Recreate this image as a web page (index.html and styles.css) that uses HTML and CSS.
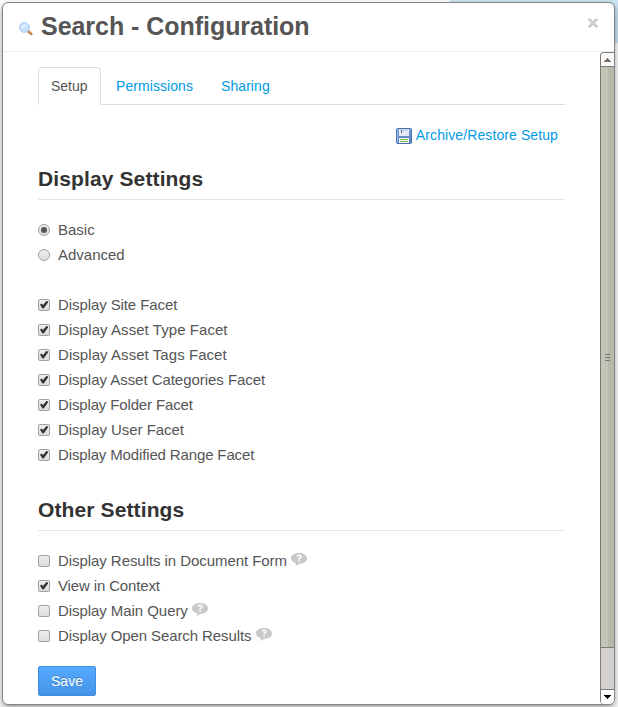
FILE: index.html
```html
<!DOCTYPE html>
<html lang="en">
<head>
<meta charset="utf-8">
<title>Search - Configuration</title>
<link rel="stylesheet" href="styles.css">
</head>
<body>
<svg class="defs" width="0" height="0">
  <symbol id="help" viewBox="0 0 16 14">
    <path d="M8 0C3.500 0 0 2.200 0 5.200c0 2.400 1.900 4.200 5 5L4.600 13 8.500 10.700c4.500 0 7.500-2.300 7.500-5.500S12.500 0 8 0z" fill="#c9c9c9"/>
    <path d="M6 3.500c.3-1.500 4-1.700 4 .2 0 1.300-2 1.200-2 2.800" fill="none" stroke="#fff" stroke-width="1.500"/>
    <rect x="7.200" y="7.300" width="1.600" height="1.500" fill="#fff"/>
  </symbol>
</svg>
<div class="dialog">
  <header class="header">
    <svg class="search-icon" width="14" height="14" viewBox="0 0 14 14">
      <path d="M9 9l3.200 2.800" stroke="#a8683a" stroke-width="2.600" stroke-linecap="round"/>
      <path d="M9.800 9.200l2.600 2.300" stroke="#efb26a" stroke-width="1.100" stroke-linecap="round"/>
      <circle cx="5.500" cy="5.500" r="4.900" fill="#c5e1fb" stroke="#a8c8ec"/>
      <path d="M2.300 5a3.500 3 0 0 1 6.200-1C6.500 4 4.200 5 3.200 7z" fill="#e4f2ff"/>
    </svg>
    <h1 class="title">Search - Configuration</h1>
    <button class="close" aria-label="Close"><svg width="12" height="12" viewBox="0 0 12 12"><path d="M1.700 1.700l8.600 8.600M10.300 1.700l-8.600 8.600" stroke="#ccc" stroke-width="2.700"/></svg></button>
  </header>
  <div class="body">
    <main class="content">
      <nav class="tabs">
        <a class="tab active">Setup</a><a class="tab wide">Permissions</a><a class="tab wide">Sharing</a>
      </nav>
      <div class="archive">
        <svg width="16" height="16" viewBox="0 0 16 16">
          <defs><linearGradient id="disk" x2="0" y2="1"><stop offset="0" stop-color="#7ba4dd"/><stop offset="1" stop-color="#4f7ac0"/></linearGradient></defs>
          <rect x=".5" y=".5" width="15" height="15" rx="1" fill="url(#disk)" stroke="#4c70b0"/>
          <path d="M1.500 1.500v13" stroke="#9dbcea"/>
          <rect x="3" y="1" width="10" height="7" fill="#e3eaf5"/>
          <rect x="4" y="1" width="8" height="2" fill="#cdd8ea"/>
          <rect x="5" y="2" width="1" height="3" fill="#4b6593"/>
          <rect x="3" y="10" width="10" height="5" fill="#f1f7ea"/>
          <path d="M4 11.500h8M4 13.500h8" stroke="#7fbf55"/>
        </svg>
        <a>Archive/Restore Setup</a>
      </div>
      <h2 class="legend">Display Settings</h2>
      <div class="group">
        <label class="row"><i class="radio on"></i>Basic</label>
        <label class="row"><i class="radio"></i>Advanced</label>
      </div>
      <div class="group facets">
        <label class="row tight"><i class="check on"></i>Display Site Facet</label>
        <label class="row loose"><i class="check on"></i>Display Asset Type Facet</label>
        <label class="row loose"><i class="check on"></i>Display Asset Tags Facet</label>
        <label class="row snug"><i class="check on"></i>Display Asset Categories Facet</label>
        <label class="row tighter"><i class="check on"></i>Display Folder Facet</label>
        <label class="row snug"><i class="check on"></i>Display User Facet</label>
        <label class="row tighter"><i class="check on"></i>Display Modified Range Facet</label>
      </div>
      <h2 class="legend other">Other Settings</h2>
      <div class="group">
        <label class="row medium"><i class="check"></i>Display Results in Document Form<svg class="help"><use href="#help"/></svg></label>
        <label class="row tighter"><i class="check on"></i>View in Context</label>
        <label class="row medium"><i class="check"></i>Display Main Query<svg class="help"><use href="#help"/></svg></label>
        <label class="row tight"><i class="check"></i>Display Open Search Results<svg class="help"><use href="#help"/></svg></label>
      </div>
      <button class="save">Save</button>
    </main>
    <div class="scrollbar">
      <div class="arrow up"><svg width="7" height="4" viewBox="0 0 7 4" shape-rendering="crispEdges"><path d="M3 0h1v1h1v1h1v1h1v1H0V3h1V2h1V1h1z" fill="#6e6c6a"/></svg></div>
      <div class="thumb"><span class="grip"></span></div>
      <div class="track"></div>
      <div class="arrow down"><svg width="7" height="4" viewBox="0 0 7 4" shape-rendering="crispEdges"><path d="M0 0h7v1H6v1H5v1H4v1H3V3H2V2H1V1H0z" fill="#000"/></svg></div>
    </div>
  </div>
</div>
</body>
</html>
```
FILE: styles.css
```css
* { box-sizing: border-box; }
body {
  margin: 0;
  padding: 2px 3px 2px 2px;
  height: 707px;
  overflow: hidden;
  background: linear-gradient(#cfe6f6, #cfe6f6) 450px 0 / 168px 43px no-repeat #fff;
  font-family: "Liberation Sans", Arial, sans-serif;
  font-size: 15px;
  color: #555;
}
.defs { position: absolute; }
.dialog {
  height: 703px;
  border: 1px solid #808589;
  border-radius: 6px;
  background: #fff;
  box-shadow: 0 3px 7px rgba(0, 0, 0, .4);
  overflow: hidden;
  display: flex;
  flex-direction: column;
}
.header {
  height: 49px;
  flex: none;
  border-bottom: 1px solid #eee;
  display: flex;
  align-items: flex-start;
  padding-left: 16px;
}
.search-icon { margin-top: 19px; }
.title { margin: 8px 0 0 8px; font-size: 25px; line-height: 30px; letter-spacing: -.04px; }
.close {
  margin: 14px 15px 0 auto;
  padding: 0;
  border: 0;
  background: none;
  line-height: 0;
}
.body { flex: 1; min-height: 0; display: flex; }
.content { flex: 1; padding: 15px 35px 0; }
.tabs {
  display: flex;
  height: 38px;
  border-bottom: 1px solid #ddd;
  font-size: 14px;
  line-height: 18px;
}
.tab {
  height: 38px;
  margin-right: 2px;
  padding: 9px 12px 0;
  border: 1px solid transparent;
  color: #009ae5;
}
.tab.wide { letter-spacing: .07px; }
.tab.active {
  width: 63px;
  border-color: #ddd #ddd #fff;
  border-radius: 4px 4px 0 0;
  color: #555;
}
.archive {
  display: flex;
  justify-content: flex-end;
  gap: 4px;
  margin-top: 23px;
  padding-right: 7px;
  height: 16px;
  font-size: 14px;
  line-height: 15px;
  letter-spacing: .1px;
  color: #009ae5;
}
.legend {
  margin: 15px 0 17px;
  height: 41px;
  border-bottom: 1px solid #e5e5e5;
  font-size: 21px;
  line-height: 40px;
  letter-spacing: .12px;
  color: #333;
}
.row { display: flex; align-items: center; height: 25px; }
.tighter { letter-spacing: -.14px; }
.tight { letter-spacing: -.09px; }
.medium { letter-spacing: -.06px; }
.snug { letter-spacing: -.04px; }
.loose { letter-spacing: .06px; }
.facets { margin-top: 25px; }
.legend.other { margin-top: 23px; }
.radio, .check {
  position: relative;
  width: 12px;
  height: 12px;
  margin-right: 8px;
  border: 1px solid #a2a2a2;
  background: linear-gradient(#eee, #dcdcdc);
}
.radio { border-radius: 50%; }
.check { border-radius: 2px; }
.radio.on::after {
  content: "";
  position: absolute;
  inset: 2px;
  border-radius: 50%;
  background: #555;
}
.check.on::after {
  content: "";
  position: absolute;
  inset: 1px;
  background: #333;
  clip-path: polygon(0 54%, 18% 36%, 38% 56%, 82% 2%, 105% 20%, 46% 100%, 32% 100%);
}
.help { width: 16px; height: 14px; margin: -2px 0 0 4px; }
.save {
  display: block;
  width: 58px;
  height: 30px;
  margin-top: 18px;
  padding: 0;
  border: 1px solid #3f8ee0;
  border-radius: 2px;
  background: linear-gradient(#55aaff, #4594e8);
  color: #fff;
  font: 14px "Liberation Sans", Arial, sans-serif;
  letter-spacing: .05px;
  text-shadow: 0 -1px 0 rgba(0, 0, 0, .25);
}
.scrollbar {
  width: 14px;
  border-left: 1px solid #7c7a78;
  border-top: 1px solid #7c7a78;
  border-radius: 4px 0 0 4px;
  background: #d4d0ce;
  display: flex;
  flex-direction: column;
  overflow: hidden;
}
.arrow { height: 14px; background: #fbf8f6; display: flex; align-items: center; justify-content: center; }
.arrow.up { border-bottom: 1px solid #7c7a78; }
.arrow.down { height: 15px; border-top: 1px solid #7c7a78; background: #fff; }
.thumb {
  height: 581px;
  border-bottom: 1px solid #7c7a78;
  background: linear-gradient(90deg, #c4c5b6 55%, #b7b8aa 55%);
  display: flex;
  align-items: center;
  justify-content: center;
}
.grip {
  width: 5px;
  height: 7px;
  background: repeating-linear-gradient(#777 0 1px, transparent 1px 3px);
}
.track { flex: 1; }
```
